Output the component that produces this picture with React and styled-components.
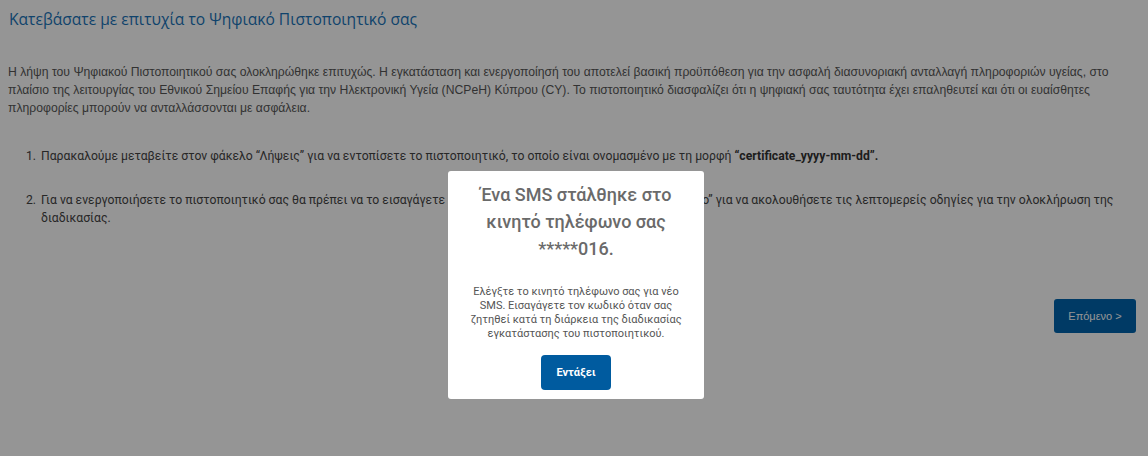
import styled, { createGlobalStyle } from 'styled-components'

const Global = createGlobalStyle`
  html, body {
    margin: 0;
    padding: 0;
    background: #fff;
  }
  body {
    font-family: "Liberation Sans", Arial, sans-serif;
  }
`

const Page = styled.div`
  padding: 8px 8px 0 8px;
  width: 1148px;
  box-sizing: border-box;
`

const Title = styled.h2`
  margin: 0 0 0 1px;
  font-family: "Open Sans", sans-serif;
  font-weight: 400;
  font-size: 15.6px;
  line-height: 22px;
  color: #1a74b9;
`

const Intro = styled.p`
  margin: 33px 0 0 0;
  font-size: 12.2px;
  line-height: 18px;
  color: #575757;
`

const Steps = styled.ol`
  margin: 30px 0 0 0;
  padding-left: 31px;
  font-family: Roboto, sans-serif;
  font-size: 12.2px;
  line-height: 18px;
  color: #444;
`

const Step = styled.li`
  padding-left: 2px;
  margin-bottom: 26px;
  b { font-weight: 700; color: #333; }
`

const Footer = styled.div`
  display: flex;
  justify-content: flex-end;
  padding: 46px 4px 0 0;
`

const NextButton = styled.button`
  width: 82px;
  height: 34px;
  border: none;
  border-radius: 3px;
  background: #0063ad;
  color: #fff;
  font-family: "Liberation Sans", Arial, sans-serif;
  font-size: 11px;
`

const Overlay = styled.div`
  position: fixed;
  inset: 0;
  background: rgba(0, 0, 0, 0.415);
  display: flex;
  justify-content: center;
  align-items: flex-start;
  padding-top: 171px;
`

const Modal = styled.div`
  width: 256px;
  height: 228px;
  margin-left: 4px;
  box-sizing: border-box;
  background: #fff;
  border-radius: 3px;
  padding: 10px 18px 0;
  display: flex;
  flex-direction: column;
  align-items: center;
  text-align: center;
  font-family: Roboto, sans-serif;
`

const ModalTitle = styled.div`
  font-size: 18px;
  font-weight: 500;
  line-height: 27px;
  color: #6a6a6a;
`

const ModalText = styled.div`
  margin-top: 23px;
  font-size: 11px;
  line-height: 14px;
  color: #555;
  margin-left: -2px;
  margin-right: -2px;
`

const OkButton = styled.button`
  margin-top: 14px;
  width: 70px;
  height: 35px;
  border: none;
  border-radius: 4px;
  background: #005b9f;
  color: #fff;
  font-family: Roboto, sans-serif;
  font-weight: 700;
  font-size: 11px;
`

export default function App() {
  return (
    <>
      <Global />
      <Page>
        <Title>Κατεβάσατε με επιτυχία το Ψηφιακό Πιστοποιητικό σας</Title>
        <Intro>
          Η λήψη του Ψηφιακού Πιστοποιητικού σας ολοκληρώθηκε επιτυχώς. Η εγκατάσταση και ενεργοποίησή του αποτελεί βασική προϋπόθεση για την ασφαλή διασυνοριακή ανταλλαγή πληροφοριών υγείας, στο πλαίσιο της λειτουργίας του Εθνικού Σημείου Επαφής για την Ηλεκτρονική Υγεία (NCPeH) Κύπρου (CY). Το πιστοποιητικό διασφαλίζει ότι η ψηφιακή σας ταυτότητα έχει επαληθευτεί και ότι οι ευαίσθητες πληροφορίες μπορούν να ανταλλάσσονται με ασφάλεια.
        </Intro>
        <Steps>
          <Step>
            Παρακαλούμε μεταβείτε στον φάκελο “Λήψεις” για να εντοπίσετε το πιστοποιητικό, το οποίο είναι ονομασμένο με τη μορφή <b>“certificate_yyyy-mm-dd”.</b>
          </Step>
          <Step>
            Για να ενεργοποιήσετε το πιστοποιητικό σας θα πρέπει να το εισαγάγετε στον φυλλομετρητή σας. Πατήστε το “Επόμενο” για να ακολουθήσετε τις λεπτομερείς οδηγίες για την ολοκλήρωση της διαδικασίας.
          </Step>
        </Steps>
        <Footer>
          <NextButton>Επόμενο &gt;</NextButton>
        </Footer>
      </Page>
      <Overlay>
        <Modal>
          <ModalTitle>Ένα SMS στάλθηκε στο κινητό τηλέφωνο σας *****016.</ModalTitle>
          <ModalText>
            Ελέγξτε το κινητό τηλέφωνο σας για νέο SMS. Εισαγάγετε τον κωδικό όταν σας ζητηθεί κατά τη διάρκεια της διαδικασίας εγκατάστασης του πιστοποιητικού.
          </ModalText>
          <OkButton>Εντάξει</OkButton>
        </Modal>
      </Overlay>
    </>
  )
}
